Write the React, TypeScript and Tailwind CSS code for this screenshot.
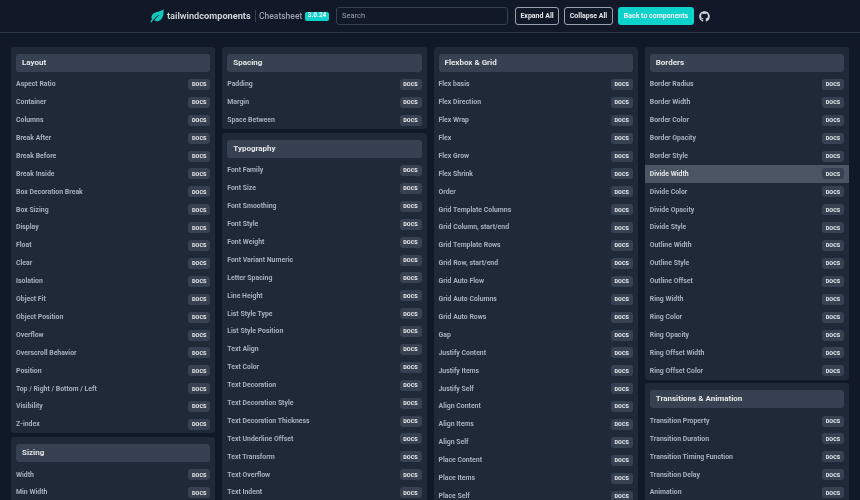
import React from 'react';
import { FaGithub } from 'react-icons/fa';

type Section = { title: string; items: string[] };

const columns: Section[][] = [
  [
    {
      title: 'Layout',
      items: ['Aspect Ratio', 'Container', 'Columns', 'Break After', 'Break Before', 'Break Inside', 'Box Decoration Break', 'Box Sizing', 'Display', 'Float', 'Clear', 'Isolation', 'Object Fit', 'Object Position', 'Overflow', 'Overscroll Behavior', 'Position', 'Top / Right / Bottom / Left', 'Visibility', 'Z-index'],
    },
    { title: 'Sizing', items: ['Width', 'Min Width'] },
  ],
  [
    { title: 'Spacing', items: ['Padding', 'Margin', 'Space Between'] },
    {
      title: 'Typography',
      items: ['Font Family', 'Font Size', 'Font Smoothing', 'Font Style', 'Font Weight', 'Font Variant Numeric', 'Letter Spacing', 'Line Height', 'List Style Type', 'List Style Position', 'Text Align', 'Text Color', 'Text Decoration', 'Text Decoration Style', 'Text Decoration Thickness', 'Text Underline Offset', 'Text Transform', 'Text Overflow', 'Text Indent'],
    },
  ],
  [
    {
      title: 'Flexbox & Grid',
      items: ['Flex basis', 'Flex Direction', 'Flex Wrap', 'Flex', 'Flex Grow', 'Flex Shrink', 'Order', 'Grid Template Columns', 'Grid Column, start/end', 'Grid Template Rows', 'Grid Row, start/end', 'Grid Auto Flow', 'Grid Auto Columns', 'Grid Auto Rows', 'Gap', 'Justify Content', 'Justify Items', 'Justify Self', 'Align Content', 'Align Items', 'Align Self', 'Place Content', 'Place Items', 'Place Self'],
    },
  ],
  [
    {
      title: 'Borders',
      items: ['Border Radius', 'Border Width', 'Border Color', 'Border Opacity', 'Border Style', 'Divide Width', 'Divide Color', 'Divide Opacity', 'Divide Style', 'Outline Width', 'Outline Style', 'Outline Offset', 'Ring Width', 'Ring Color', 'Ring Opacity', 'Ring Offset Width', 'Ring Offset Color'],
    },
    {
      title: 'Transitions & Animation',
      items: ['Transition Property', 'Transition Duration', 'Transition Timing Function', 'Transition Delay', 'Animation'],
    },
  ],
];

const Leaf = () => (
  <svg viewBox="0 0 14 14" className="h-[14px] w-[14px]" fill="#13c7bb">
    <path d="M13.6 0.3C13.8 4.6 13.2 8.4 11 10.6C9 12.6 6.2 12.8 4.3 11.6C6 9 8 6.9 10.4 5.2C7.6 6.4 5.2 8.4 3.2 11C2.6 11.7 2 12.6 1.5 13.6L0.3 13.2C0.8 12.2 1.3 11.3 1.9 10.5C0.9 8.4 1.5 6 3.4 4.6C6 2.7 10 3 13.6 0.3Z" />
  </svg>
);

const Header = () => (
  <header className="flex h-[33px] items-center border-b border-[#2d3748] pl-[150px]">
    <Leaf />
    <span className="ml-[3px] w-[84px] text-[9.2px] font-semibold whitespace-nowrap text-gray-300">
      tailwind<span className="font-bold">components</span>
    </span>
    <span className="ml-[4px] h-[12px] w-px bg-gray-700" />
    <span className="ml-[3px] w-[42px] text-[8.5px] font-medium text-gray-400">Cheatsheet</span>
    <span className="ml-[4px] flex h-[9px] w-[24px] items-center justify-center rounded-[2px] bg-[#0dd3cc] text-[6.5px] font-bold text-gray-100">
      3.0.24
    </span>
    <div className="ml-[7px] flex h-[18px] w-[172px] items-center rounded-[3px] border border-gray-700 px-[5px] text-[7.5px] text-gray-400">
      Search
    </div>
    <button className="ml-[7px] h-[18px] w-[44px] rounded-[3px] border border-gray-400 text-[7px] font-bold text-gray-200">
      Expand All
    </button>
    <button className="ml-[5px] h-[18px] w-[49px] rounded-[3px] border border-gray-400 text-[7px] font-bold text-gray-200">
      Collapse All
    </button>
    <button className="ml-[5px] h-[18px] w-[76px] rounded-[3px] bg-[#0dd3cc] text-[7px] font-bold text-gray-100">
      Back to components
    </button>
    <FaGithub className="ml-[5px] h-[11px] w-[11px] text-gray-300" />
  </header>
);

const Row = ({ label, active }: { label: string; active: boolean }) => (
  <div className={`flex h-[17.9px] items-center justify-between px-[5px] ${active ? 'bg-[#4b5563] text-gray-200' : 'text-[#a7b0bd]'}`}>
    <span className="text-[6.9px] font-bold">{label}</span>
    <span className="flex h-[11px] w-[22px] items-center justify-center rounded-[3px] bg-[#374151] text-[5.5px] font-extrabold text-gray-200">
      DOCS
    </span>
  </div>
);

const Card = ({ title, items }: Section) => (
  <section className="rounded-[3px] bg-[#1f2937] pt-[7px]">
    <div className="mx-[5px] mb-[4px] flex h-[18px] items-center rounded-[3px] bg-[#374151] px-[6px] text-[8px] font-bold text-gray-200">
      {title}
    </div>
    {items.map((item) => (
      <Row key={item} label={item} active={item === 'Divide Width'} />
    ))}
  </section>
);

export default function App() {
  return (
    <div className="h-[500px] overflow-hidden bg-[#111827] font-['Roboto',sans-serif] will-change-transform">
      <Header />
      <div className="grid grid-cols-4 gap-x-[7px] px-[11px] pt-[13.6px]">
        {columns.map((sections) => (
          <div key={sections[0].title} className="flex flex-col gap-[3.4px]">
            {sections.map((section) => (
              <Card key={section.title} {...section} />
            ))}
          </div>
        ))}
      </div>
    </div>
  );
}
